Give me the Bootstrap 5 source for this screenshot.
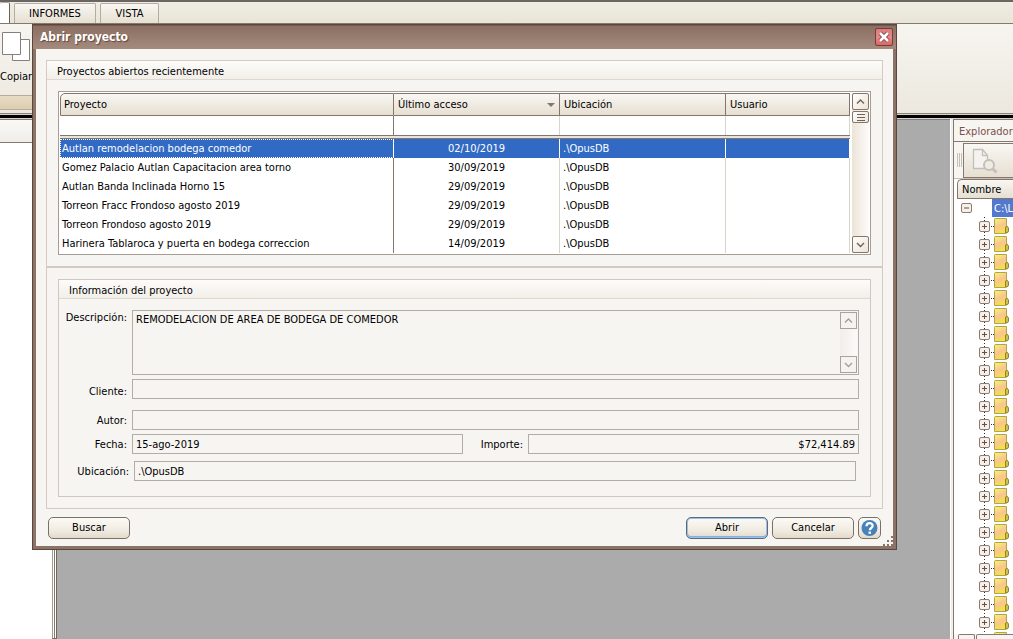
<!DOCTYPE html>
<html lang="es">
<head>
<meta charset="utf-8">
<meta name="viewport" content="width=device-width, initial-scale=1">
<title>Abrir proyecto</title>
<link href="https://cdn.jsdelivr.net/npm/bootstrap@5.3.0/dist/css/bootstrap.min.css" rel="stylesheet">
<style>
:root{--edge:#85756a;--soft:#d3cac2;--field:#b3ada6;--paper:#f7f5f2;--grad:linear-gradient(#f9f7f3,#e6dfd1)}
body{font:11px/14px "DejaVu Sans Condensed","DejaVu Sans",sans-serif;color:#000;background:#fff}
button,input,textarea{font:inherit;color:inherit}
button{padding:0}
.tabstrip{height:24px;background:linear-gradient(#efece2,#e9e5d8);border-top:2px solid #6b6663;border-bottom:1px solid #85796f;padding-top:1px}
.rtab{border:1px solid #b5aca0;border-bottom:0;background:var(--grad);border-radius:2px 2px 0 0;height:20px}
.rtab.first{width:10px;background:#fff;border-left:0;border-right-color:#6b625b;height:21px}
.ribbon{height:90px;background:linear-gradient(#f7f5f0,#ece8df);border-bottom:1px solid #8d8477}
.rgroup{width:32px}
.rcaption{height:15px;background:linear-gradient(#e9dcc4,#dccdb0);border:1px solid #b9ab98;border-width:1px 0;margin-bottom:3px}
.blackbar{height:5px;background:#000;border:1px solid #d8d2c8}
.blackbar{border-width:1px 0}
.leftpane{width:52px}
.leftpane header{height:24px;border:1px solid #85796f;border-width:1px 0;background:linear-gradient(#faf9f7,#f0ede8)}
.splitter{width:5px;border:1px solid #6f675f;border-left-color:#a39a8d;background:linear-gradient(90deg,#fff 1px,#85796f 1px 2px,#fff 2px)}
.workspace{background:#ababab;border-top:1px solid #7b7b7b;margin-right:3px}
.explorer{width:60px;border-left:1px solid #85796f;box-shadow:-2px 0 #f1efeb;background:#fff}
.explorer header{height:23px;color:#7a5148;border:1px solid #85796f;border-width:1px 0;background:#f7f5f2;padding:5px 0 0 5px}
.toolstrip{height:37px;background:#f7f5f2;padding:1px 0 1px 3px;border-bottom:1px solid #c8bfb4}
.grip{width:6px;height:14px;background:repeating-linear-gradient(90deg,#c5beb5 0 1px,#f7f5f2 1px 2px)}
.toolbtn{height:35px;width:60px;border:1px solid #85796f;background:var(--grad);text-align:left}
.namehead{height:20px;margin-left:3px;padding:3px 0 0 4px;border:1px solid var(--edge);border-right:0;border-radius:5px 0 0 0;background:var(--grad)}
.tree{margin:0;padding:0;list-style:none;flex:1 1 0;min-height:0;overflow:hidden}
.tree li{height:18px}
.rootname{background:#5379cf;color:#fff;height:18px;padding:3px 2px 0;width:40px}
.panetabs{height:5px;background:#f7f5f2}
.panetabs i{height:5px;border:1px solid #85796f;border-bottom:0;border-radius:2px 2px 0 0;width:17px}
.panetabs i+i{width:50px;margin-left:1px}
.dlg{position:absolute;top:24px;left:32px;right:116px;background:var(--paper);border:solid #8c7367;border-width:0 4px 4px;outline:1px solid #5c473e;outline-offset:-1px}
.titlebar{height:25px;margin:0 -4px;padding:1px 4px 0 8px;background:linear-gradient(#5c473e 1px,#8a6f62 2px,#a58b7d);color:#fff}
.titlebar h1{font:bold 12px/16px "DejaVu Sans Condensed","DejaVu Sans",sans-serif;margin:0;text-shadow:1px 1px 1px #5c473e}
.closebtn{width:18px;height:18px;border:1px solid #7b3a35;border-radius:2px;background:linear-gradient(#d97c7c,#e58a8a 50%,#dc6666);line-height:0}
.dlgbody{padding:11px 10px 7px}
.frame{border:1px solid var(--soft)}
.frame h2,.subframe h2{font-size:11px;line-height:14px;margin:0;height:19px;padding:4px 10px 0;background:linear-gradient(#fdfcfa,#f2efe9);border-bottom:1px solid #dfd8ce;font-weight:400}
.gridbox{border:1px solid #a69e94;background:#fff;margin:11px;height:164px;padding:1px 1px 0}
.lower{border-top:2px solid var(--soft);padding:11px}
.subframe{border:1px solid #cfc8c0}
.projects{width:100%;table-layout:fixed;border-collapse:separate;border-spacing:0}
.projects th,.projects td{padding:0 3px;font-weight:400;white-space:nowrap;overflow:hidden;border-right:1px solid #d9d4ca;height:19px}
.projects th{height:23px;border:1px solid var(--edge);border-left:0;background:var(--grad)}
.projects th:first-child{border-left:1px solid var(--edge);border-radius:5px 0 0 0}
.projects th+th{padding-left:4px}
.projects td:first-child{border-right-color:var(--edge);padding-left:2px}
.projects .divider td{height:4px;padding:0;line-height:0;background:#e9e4d9;border:0;border-top:1px solid var(--edge);border-bottom:1px solid var(--edge)}
.projects .picked td{background:#316ac5;color:#fff;border-right-color:#fff}
.projects .picked td:first-child{outline:1px dotted #fff;outline-offset:-1px}
.scroller{width:17px;background:linear-gradient(90deg,#ebe3d6,#fdfcfb)}
.gridbox .scroller{margin:0 0 1px 2px}
.sbtn{width:17px;height:17px;border:1px solid var(--edge);border-radius:2px;background:linear-gradient(135deg,#fefefd,#ece4d7);line-height:0}
.sthumb{height:12px;margin-top:1px}
.infoform{padding:11px 11px 15px 0}
.infoform label{width:73px;text-align:right;padding:1px 5px 0 0;flex:none}
.infoform .amount{width:65px}
.box{border:1px solid var(--field);background:#f7f5f2;border-radius:0;height:20px;min-width:0;padding:0 3px;flex:1 1 0;outline:0}
.areabox{height:65px}
.areabox textarea{border:0;background:none;resize:none;padding:2px 0;outline:0;overflow:hidden;height:60px}
.areabox .sbtn{border-color:#aaa39b;border-radius:0;background:#f5f3f0}
.areabox .scroller{margin:1px -2px 1px 0;background:linear-gradient(90deg,#f1eeeb,#fbfaf8)}
.cmd{height:22px;width:82px;border:1px solid #7b6f66;border-radius:5px;background:linear-gradient(#fbfaf6,#f1ece2 60%,#e3dbcb)}
.cmd.go{box-shadow:inset 0 0 0 1px #9dbfe2,inset 0 -1px 0 1px #7fb0e6;border-color:#5f6b7a}
.cmd.help{width:23px;line-height:0}
.cmdrow{margin-top:8px;padding:0 2px}
.sizer{position:absolute;right:0;bottom:0;line-height:0}
</style>
</head>
<body class="vh-100 overflow-hidden d-flex flex-column position-relative">
<nav class="tabstrip d-flex flex-shrink-0 gap-1 align-items-end">
  <span class="rtab first"></span>
  <button class="rtab px-0" style="width:82px">INFORMES</button>
  <button class="rtab px-0" style="width:59px">VISTA</button>
</nav>
<div class="ribbon flex-shrink-0">
  <div class="rgroup h-100 d-flex flex-column overflow-hidden">
    <svg width="32" height="34" class="mt-1 flex-shrink-0"><g fill="#fff" stroke="#85807c"><path d="M12.500 11.500h17v21h-17z"/><path d="M2.500 4.500h18v22h-18z"/></g></svg>
    <span class="pt-1 mt-1">Copiar</span>
    <div class="rcaption mt-auto"></div>
  </div>
</div>
<div class="blackbar flex-shrink-0"></div>
<main class="d-flex flex-fill" style="min-height:0">
  <section class="leftpane flex-shrink-0"><header></header></section>
  <div class="splitter flex-shrink-0"></div>
  <section class="workspace flex-fill"></section>
  <aside class="explorer flex-shrink-0 d-flex flex-column overflow-hidden">
    <header class="flex-shrink-0">Explorador</header>
    <div class="toolstrip d-flex align-items-center flex-shrink-0">
      <span class="grip flex-shrink-0"></span>
      <button class="toolbtn flex-shrink-0" aria-label="Vista previa"><svg width="36" height="30" fill="none" stroke="#c3bfba" stroke-width="1.300"><path d="M9.500 4.500h9l5 6v13h-14z" fill="#f5f3ef"/><path d="M18.500 4.500v6h5"/><circle cx="25" cy="20" r="5" fill="#f0ece4" stroke-width="2"/><path d="M28.500 23.500l4 4" stroke-width="3"/></svg></button>
    </div>
    <div class="namehead flex-shrink-0">Nombre</div>
    <ul class="tree" id="tree">
      <li class="d-flex align-items-center"><svg width="38" height="18" class="flex-shrink-0"><rect x="7.500" y="4.500" width="10" height="9" rx="1.500" fill="#f6f0ea" stroke="#8d7a70"/><path d="M10 9h5" stroke="#6b4f47"/></svg><span class="rootname flex-shrink-0">C:\L</span></li>
    </ul>
    <div class="panetabs d-flex flex-shrink-0"><i class="flex-shrink-0 ms-1"></i><i class="flex-shrink-0"></i></div>
  </aside>
</main>

<div class="dlg" role="dialog" aria-labelledby="dlgTitle">
  <div class="titlebar d-flex justify-content-between align-items-center">
    <h1 id="dlgTitle">Abrir proyecto</h1>
    <button class="closebtn" aria-label="Cerrar"><svg width="16" height="16"><path d="M4 4l8 8M12 4l-8 8" stroke="#8b3c3c" stroke-width="4.500"/><path d="M4 4l8 8M12 4l-8 8" stroke="#fff" stroke-width="2.600"/></svg></button>
  </div>
  <div class="dlgbody">
    <div class="frame">
      <h2>Proyectos abiertos recientemente</h2>
      <div class="gridbox d-flex">
        <div class="flex-fill overflow-hidden">
        <table class="projects">
          <colgroup><col><col style="width:166px"><col style="width:166px"><col style="width:124px"></colgroup>
          <thead><tr><th>Proyecto</th><th><div class="d-flex justify-content-between align-items-center">Último acceso<svg width="10" height="6"><path d="M1 1h8L5 5z" fill="#85756a"/></svg></div></th><th>Ubicación</th><th>Usuario</th></tr></thead>
          <tbody id="rows">
            <tr><td></td><td></td><td></td><td></td></tr>
            <tr class="divider"><td colspan="4"></td></tr>
          </tbody>
        </table>
        </div>
        <div class="scroller d-flex flex-column flex-shrink-0">
          <button class="sbtn" aria-label="Subir"><svg width="15" height="15"><path d="M4 9.500l3.500-3.500 3.500 3.500" fill="none" stroke="#6f6259" stroke-width="1.400"/></svg></button>
          <button class="sbtn sthumb" aria-label="Desplazar"><svg width="15" height="10"><path d="M4 2.500h8M4 5.500h8M4 8.500h8" stroke="#6f6259"/></svg></button>
          <button class="sbtn mt-auto" aria-label="Bajar"><svg width="15" height="15"><path d="M4 6l3.500 3.500L11 6" fill="none" stroke="#6f6259" stroke-width="1.400"/></svg></button>
        </div>
      </div>
      <div class="lower">
        <div class="subframe">
          <h2>Información del proyecto</h2>
          <form class="infoform">
            <div class="d-flex"><label for="desc">Descripción:</label>
              <div class="box areabox d-flex"><textarea id="desc" class="flex-fill" readonly>REMODELACION DE AREA DE BODEGA DE COMEDOR</textarea>
                <div class="scroller d-flex flex-column justify-content-between">
                  <button type="button" class="sbtn" aria-label="Subir texto"><svg width="15" height="15"><path d="M4 9.500l3.500-3.500 3.500 3.500" fill="none" stroke="#a59e97" stroke-width="1.400"/></svg></button>
                  <button type="button" class="sbtn" aria-label="Bajar texto"><svg width="15" height="15"><path d="M4 6l3.500 3.500L11 6" fill="none" stroke="#a59e97" stroke-width="1.400"/></svg></button>
                </div></div></div>
            <div class="d-flex align-items-end mt-1"><label for="cli">Cliente:</label><input id="cli" class="box" readonly></div>
            <div class="d-flex align-items-center" style="margin-top:11px"><label for="aut">Autor:</label><input id="aut" class="box" readonly></div>
            <div class="d-flex align-items-center mt-1"><label for="fec">Fecha:</label><input id="fec" class="box" value="15-ago-2019" readonly><label for="imp" class="amount">Importe:</label><input id="imp" class="box text-end" value="$72,414.89" readonly></div>
            <div class="d-flex align-items-center" style="margin:7px 3px 0 2px"><label for="ubi">Ubicación:</label><input id="ubi" class="box" value=".\OpusDB" readonly></div>
          </form>
        </div>
      </div>
    </div>
    <div class="cmdrow d-flex gap-1">
      <button class="cmd me-auto">Buscar</button>
      <button class="cmd go">Abrir</button>
      <button class="cmd">Cancelar</button>
      <button class="cmd help" aria-label="Ayuda"><svg width="21" height="20"><circle cx="10.500" cy="10" r="8" fill="#4682b8"/><path d="M7.500 8.200c0-4 6.200-4 6.200-.4 0 2.200-2.900 2.200-2.900 4.400" fill="none" stroke="#fff" stroke-width="2.200"/><path d="M9.500 13.600h2.500v2.200H9.500z" fill="#fff"/></svg></button>
    </div>
  </div>
  <svg class="sizer" width="10" height="11" fill="#8c7367"><path d="M8 1h2v2H8zM4 5h2v2H4zM8 5h2v2H8zM0 9h2v2H0zM4 9h2v2H4zM8 9h2v2H8z"/></svg>
</div>
<script>
const projects=[["Autlan remodelacion bodega comedor","02/10/2019"],["Gomez Palacio Autlan Capacitacion area torno","30/09/2019"],["Autlan Banda Inclinada Horno 15","29/09/2019"],["Torreon Fracc Frondoso agosto 2019","29/09/2019"],["Torreon Frondoso agosto 2019","29/09/2019"],["Harinera Tablaroca y puerta en bodega correccion","14/09/2019"]];
rows.innerHTML+=projects.map((p,i)=>`<tr${i?"":' class="picked"'}><td>${p[0]}</td><td class="text-center">${p[1]}</td><td>.\\OpusDB</td><td></td></tr>`).join("");
const folder=`<li><svg width="62" height="18"><path d="M30.500 0v18" stroke="#333" stroke-dasharray="1 2"/><path d="M35 9.500h5" stroke="#333" stroke-dasharray="1 1"/><rect x="25.500" y="4.500" width="10" height="10" rx="1.500" fill="#f6f0ea" stroke="#8d7a70"/><path d="M28 9.500h5M30.500 7v5" stroke="#6b4f47"/><path d="M40.500 2.500q0-1 1-1h11v14q0 1-1 1h-11z" fill="url(#fg)" stroke="#b0a548"/><path d="M51.500 16V10q2-2 3 1v3q0 2-3 2z" fill="#cfbf55" stroke="#94812f"/></svg></li>`;
tree.innerHTML+=folder.repeat(24);
</script>
<svg width="0" height="0" class="position-absolute"><defs><linearGradient id="fg" x2=".4" y2="1"><stop stop-color="#f1f07a"/><stop offset=".25" stop-color="#f8e27c"/><stop offset=".55" stop-color="#f9c492"/><stop offset="1" stop-color="#f2e04c"/></linearGradient></defs></svg>
<script src="https://cdn.jsdelivr.net/npm/bootstrap@5.3.0/dist/js/bootstrap.bundle.min.js"></script>
</body>
</html>
